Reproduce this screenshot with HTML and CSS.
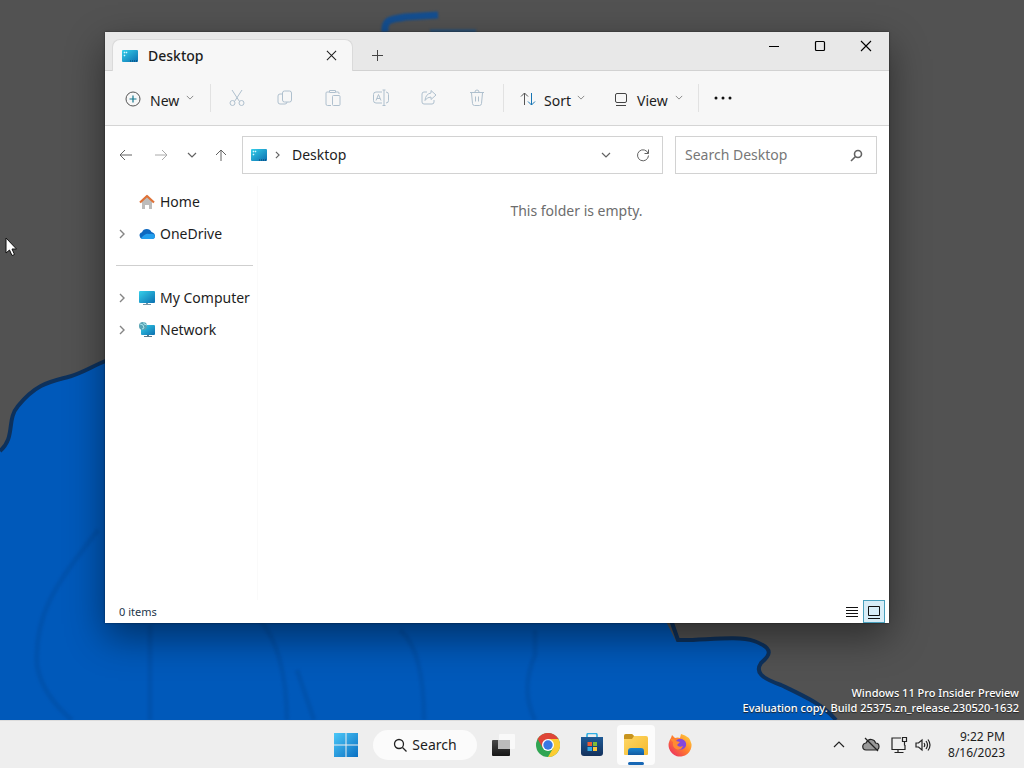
FILE: index.html
```html
<!DOCTYPE html>
<html lang="en">
<head>
<meta charset="utf-8">
<meta name="viewport" content="width=device-width, initial-scale=1">
<title>Desktop</title>
<link rel="stylesheet" href="styles.css">
</head>
<body>
<svg class="defs" aria-hidden="true">
  <defs>
    <linearGradient id="teal" x1="0" y1="0" x2="1" y2="1"><stop offset="0" stop-color="#35d0ea"/><stop offset="1" stop-color="#0b6fb0"/></linearGradient>
    <linearGradient id="win" x1="0" y1="0" x2="1" y2="1"><stop offset="0" stop-color="#4cc8f8"/><stop offset="1" stop-color="#0a6fc2"/></linearGradient>
    <linearGradient id="folder" x1="0" y1="0" x2="1" y2="1"><stop offset="0" stop-color="#ffd968"/><stop offset="1" stop-color="#f5b92e"/></linearGradient>
    <linearGradient id="dock" x1="0" y1="0" x2="0" y2="1"><stop offset="0" stop-color="#1a86d0"/><stop offset="1" stop-color="#1259a0"/></linearGradient>
    <linearGradient id="bag" x1="0" y1="0" x2="0" y2="1"><stop offset="0" stop-color="#1d5a96"/><stop offset="1" stop-color="#14315c"/></linearGradient>
    <linearGradient id="dark" x1="0" y1="0" x2="0" y2="1"><stop offset="0" stop-color="#484848"/><stop offset="1" stop-color="#161616"/></linearGradient>
    <linearGradient id="fire" x1="1" y1="0" x2="0" y2="1"><stop offset="0" stop-color="#ffdc3c"/><stop offset=".5" stop-color="#ff7a2e"/><stop offset="1" stop-color="#e8206c"/></linearGradient>
    <symbol id="i-desktop" viewBox="0 0 16 12"><rect width="16" height="12" rx="1" fill="url(#teal)"/><path d="M2 2h1v1H2zM2 5h1v1H2zM4 2h1v1H4z" fill="#d8f8ff" stroke="#d8f8ff" stroke-width=".5"/><path d="M8 11h1m1 0h1m1 0h1m1 0h1" stroke="#063b66"/></symbol>
    <symbol id="i-down" viewBox="0 0 10 6"><path d="M1 1l4 4 4-4" fill="none" stroke="currentColor" stroke-width="1.2"/></symbol>
    <symbol id="i-right" viewBox="0 0 6 10"><path d="M1 1l4 4-4 4" fill="none" stroke="currentColor" stroke-width="1.4"/></symbol>
    <symbol id="i-close" viewBox="0 0 12 12"><path d="M1 1l10 10M11 1L1 11" fill="none" stroke="currentColor" stroke-width="1.1"/></symbol>
  </defs>
</svg>

<main class="desktop">
  <svg class="wallpaper" viewBox="0 0 1024 720" preserveAspectRatio="none" aria-hidden="true">
    <rect width="1024" height="720" fill="#525252"/>
    <path d="M0 451C16 437 6 420 18 406C36 384 49 382 68 377C83 373 92 366 108 360L400 330L660 610L676 641C700 642 735 635 756 642C776 649 769 656 761 663C755 672 761 678 781 685C804 696 822 704 836 720H0Z" fill="#0059ba"/>
    <g fill="none" stroke="#0d315c" stroke-width="4">
      <path d="M0 451C16 437 6 420 18 406C36 384 49 382 68 377C83 373 92 366 108 360"/>
      <path d="M671 620L678 640C700 641 738 635 754 641C776 649 769 656 761 663C755 672 761 678 781 685C804 696 822 704 836 720"/>
    </g>
    <path class="soft" d="M385 32C384 18 392 20 405 17L438 15" fill="none" stroke="#144f91" stroke-width="7"/>
    <path class="soft" d="M430 31h46" stroke="#24507c" stroke-width="3"/>
    <path class="soft" d="M98 530C60 580 34 610 37 665Q42 695 72 720M150 625V720M260 620Q286 650 287 720M297 670L314 720M400 630Q424 650 424 720M535 630V655Q520 690 535 720" fill="none" stroke="#0053ae" stroke-width="5"/>
  </svg>

  <section class="window" aria-label="Desktop">
    <header class="titlebar">
      <div class="tab">
        <svg class="folder-icon"><use href="#i-desktop"/></svg>
        <span class="tab-title">Desktop</span>
        <button class="tab-close" aria-label="Close tab"><svg width="11" height="11"><use href="#i-close"/></svg></button>
      </div>
      <button class="new-tab" aria-label="New tab"><svg width="11" height="11" viewBox="0 0 11 11"><path d="M5.500 0v11M0 5.500h11" stroke="currentColor" fill="none"/></svg></button>
      <div class="controls">
        <button aria-label="Minimize"><svg width="12" height="12" viewBox="0 0 12 12"><path d="M1 6.500h10" stroke="currentColor"/></svg></button>
        <button aria-label="Maximize"><svg width="12" height="12" viewBox="0 0 12 12"><rect x="1.500" y="1.500" width="9" height="9" rx="1" fill="none" stroke="currentColor" stroke-width="1.2"/></svg></button>
        <button aria-label="Close"><svg width="12" height="12"><use href="#i-close"/></svg></button>
      </div>
    </header>

    <div class="toolbar" role="toolbar" aria-label="Commands">
      <button class="command new"><svg width="16" height="16" viewBox="0 0 16 16" fill="none"><circle cx="8" cy="8" r="7" stroke="#555"/><path d="M8 4.500v7M4.500 8h7" stroke="#12768e" stroke-width="1.2"/></svg><span>New</span><svg class="chev"><use href="#i-down"/></svg></button>
      <span class="rule"></span>
      <div class="tools">
        <button disabled aria-label="Cut"><svg width="18" height="18" viewBox="0 0 18 18"><path d="M4 1l7.500 11.500M14 1L6.500 12.500"/><circle cx="4.500" cy="14" r="2.500"/><circle cx="13.500" cy="14" r="2.500"/></svg></button>
        <button disabled aria-label="Copy"><svg width="18" height="18" viewBox="0 0 18 18"><rect x="6.500" y="2" width="9" height="11" rx="2"/><path d="M6 5H4Q2 5 2 7v6q0 2 2 2h5q2 0 2-2"/></svg></button>
        <button disabled aria-label="Paste"><svg width="18" height="18" viewBox="0 0 18 18"><path d="M5 3H3q-1 0-1 1v11q0 1.500 1.500 1.500H7M12 3h2q1 0 1 1v1"/><path d="M5.500 1.500h6v2h-6z"/><rect x="8.500" y="6.500" width="7.500" height="10" rx="1"/></svg></button>
        <button disabled aria-label="Rename"><svg width="18" height="18" viewBox="0 0 18 18"><path d="M10 3H4Q1.500 3 1.500 5.500v6Q1.500 14 4 14h6M14 3q2.500 0 2.500 2.500v6Q16.500 14 14 14M12 1v15M10.500 1h3M10.500 16.500h3M4 11.500l2.500-6 2.500 6M5 9.500h3"/></svg></button>
        <button disabled aria-label="Share"><svg width="18" height="18" viewBox="0 0 18 18"><path d="M7 3H4Q2 3 2 5v8q0 2 2 2h8q2 0 2-2v-2"/><path d="M11 1.500l5 4.500-5 4.500V8Q7 8 5 11.500 5.500 5 11 4z"/></svg></button>
        <button disabled aria-label="Delete"><svg width="18" height="18" viewBox="0 0 18 18"><path d="M2 3.500h14M7 3q0-2 2-2t2 2M3.500 4l1 10.500q.2 2 2 2h5q1.800 0 2-2l1-10.500M7.500 7.500v5M10.500 7.500v5"/></svg></button>
      </div>
      <span class="rule"></span>
      <button class="command sort"><svg width="16" height="16" viewBox="0 0 16 16" fill="none"><path d="M4.500 14V2M1 5.500L4.500 2 8 5.500" stroke="#555"/><path d="M11.500 2v12M8 10.500l3.500 3.500 3.500-3.500" stroke="#1775b4"/></svg><span>Sort</span><svg class="chev"><use href="#i-down"/></svg></button>
      <button class="command view"><svg width="14" height="14" viewBox="0 0 14 14" fill="none" stroke="#444"><rect x="1.500" y="1.500" width="11" height="9" rx="1.500"/><path d="M2 13.500h10"/></svg><span>View</span><svg class="chev"><use href="#i-down"/></svg></button>
      <span class="rule"></span>
      <button class="more" aria-label="See more"><svg width="18" height="4" viewBox="0 0 18 4"><circle cx="2" cy="2" r="1.500"/><circle cx="9" cy="2" r="1.500"/><circle cx="16" cy="2" r="1.500"/></svg></button>
    </div>

    <div class="location">
      <div class="history">
        <button aria-label="Back"><svg width="14" height="12" viewBox="0 0 14 12"><path d="M13 6H1.500M6 1L1 6l5 5"/></svg></button>
        <button class="off" aria-label="Forward"><svg width="14" height="12" viewBox="0 0 14 12"><path d="M1 6h11.500M8 1l5 5-5 5"/></svg></button>
        <button class="narrow" aria-label="Recent locations"><svg width="10" height="6"><use href="#i-down"/></svg></button>
        <button class="up" aria-label="Up"><svg width="12" height="12" viewBox="0 0 12 12"><path d="M6 12V1M1 6l5-5 5 5"/></svg></button>
      </div>
      <nav class="address" aria-label="Address">
        <svg class="folder-icon"><use href="#i-desktop"/></svg>
        <svg class="crumb" width="5" height="8"><use href="#i-right"/></svg>
        <a href="#">Desktop</a>
        <button class="drop" aria-label="Previous locations"><svg width="10" height="6"><use href="#i-down"/></svg></button>
        <button class="reload" aria-label="Refresh"><svg width="14" height="14" viewBox="0 0 14 14"><path d="M12.200 5.500A5.500 5.500 0 1 0 12.500 7.500M12.500 1.500v4h-4"/></svg></button>
      </nav>
      <label class="find"><input type="search" placeholder="Search Desktop" aria-label="Search Desktop"><svg width="13" height="13" viewBox="0 0 13 13"><circle cx="8" cy="5" r="3.500"/><path d="M5.500 7.500L1 12"/></svg></label>
    </div>

    <div class="body">
      <nav class="sidebar" aria-label="Navigation">
        <a href="#"><span class="expand"></span><svg class="place" viewBox="0 0 16 16"><path d="M3 7l5-5 5 5v8h-3v-4H6v4H3z" fill="#bdbcbb"/><path d="M1 8.500L8 2l7 6.500" fill="none" stroke="#df7237" stroke-width="2.200" stroke-linejoin="round"/></svg>Home</a>
        <a href="#"><svg class="expand"><use href="#i-right"/></svg><svg class="place" viewBox="0 0 16 16"><path d="M3.500 13A3.500 3.500 0 0 1 3 6.200 5.200 5.200 0 0 1 12.500 6Q16 7 16 10q0 3-3 3z" fill="#0d68c0"/><path d="M2 12.500Q6 7 10 8q5-1 6 2 0 3-3 3H3.500z" fill="#239eed"/></svg>OneDrive</a>
        <hr>
        <a href="#"><svg class="expand"><use href="#i-right"/></svg><svg class="place" viewBox="0 0 16 16"><rect y="1" width="16" height="12" rx="1" fill="url(#teal)"/><path d="M7 13h2v1h3v1H4v-1h3z" fill="#7795a5"/></svg>My Computer</a>
        <a href="#"><svg class="expand"><use href="#i-right"/></svg><svg class="place" viewBox="0 0 16 16"><rect x="2" y="3" width="14" height="10" rx="1" fill="url(#teal)"/><path d="M8 13h2v1h3v1H5v-1h3z" fill="#58798c"/><circle cx="4" cy="4" r="4" fill="#58a3b4"/><path d="M1 2l3 1 1 3-2 1M5 0v2l3 1" stroke="#a5e2ea" fill="none"/></svg>Network</a>
      </nav>
      <div class="files"><p>This folder is empty.</p></div>
    </div>

    <footer class="status">
      <span>0 items</span>
      <div class="modes">
        <button aria-label="Details"><svg width="14" height="12" viewBox="0 0 14 12"><path d="M1 1.500h12M1 4.500h12M1 7.500h12M1 10.500h12"/></svg></button>
        <button class="on" aria-label="Large icons"><svg width="14" height="14" viewBox="0 0 14 14"><path d="M1.500 1.500h11v9h-11zM1 13.500h12"/></svg></button>
      </div>
    </footer>
  </section>

  <p class="watermark">Windows 11 Pro Insider Preview<br>Evaluation copy. Build 25375.zn_release.230520-1632</p>
  <svg class="pointer" width="13" height="20" viewBox="0 0 13 20" aria-hidden="true"><path d="M1 1v15l3.500-3 2.500 5.500 2.500-1-2.500-5.500h4.500z" fill="#fff" stroke="#111"/></svg>
</main>

<footer class="taskbar">
  <div class="apps">
    <button class="app start" aria-label="Start"><svg width="24" height="24" viewBox="0 0 24 24"><path d="M0 0h11.500v11.500H0zM12.500 0H24v11.500H12.500zM0 12.500h11.500V24H0zM12.500 12.500H24V24H12.500z" fill="url(#win)"/></svg></button>
    <button class="search"><svg width="14" height="14" viewBox="0 0 14 14"><circle cx="6" cy="6" r="4.500"/><path d="M9.500 9.500l4 4"/></svg>Search</button>
    <button class="app" aria-label="Task view"><svg width="24" height="24" viewBox="0 0 24 24"><rect x="0" y="7" width="18" height="16" rx="1" fill="url(#dark)"/><rect x="7" y="1" width="16" height="15" rx="1" fill="#fff" opacity=".65"/><path d="M6 7h12v9H6z" fill="#bcbcbc"/></svg></button>
    <button class="app" aria-label="Chrome"><svg width="24" height="24" viewBox="0 0 24 24"><circle cx="12" cy="12" r="12" fill="#30a553"/><path d="M1.600 6A12 12 0 0 1 22.400 6H12L6.800 15z" fill="#df4537"/><path d="M22.400 6A12 12 0 0 1 12 24l5.200-9L12 6z" fill="#fccc32"/><circle cx="12" cy="12" r="6" fill="#fff"/><circle cx="12" cy="12" r="4.700" fill="#3878e3"/></svg></button>
    <button class="app" aria-label="Store"><svg width="24" height="24" viewBox="0 0 24 24"><path d="M7 5V2q0-1.500 1.500-1.500h7Q17 .5 17 2v3" fill="none" stroke="#30aee3" stroke-width="1.600"/><path d="M1 4h22v16q0 3-3 3H4q-3 0-3-3z" fill="url(#bag)"/><path d="M7.500 9H12v4H7.500z" fill="#ed5b34"/><path d="M13 9h4v4h-4z" fill="#7dbb37"/><path d="M7.500 14H12v4H7.500z" fill="#32a9e4"/><path d="M13 14h4v4h-4z" fill="#fbc53a"/></svg></button>
    <button class="app active" aria-label="File Explorer"><svg width="26" height="24" viewBox="0 0 26 24"><path d="M1 3q0-2 2-2h6l2 2h12q2 0 2 2v16q0 1-1 1H2q-1 0-1-1z" fill="url(#folder)"/><path d="M1 3q0-2 2-2h6l2 2-2 3H1z" fill="#c79420"/><path d="M5 22v-4q0-3 3-3h10q3 0 3 3v4z" fill="url(#dock)"/></svg></button>
    <button class="app" aria-label="Firefox"><svg width="24" height="24" viewBox="0 0 24 24"><path d="M3 5l1-3 3 3q3-1 5 0L13 1q9 2 10.500 10A11.500 11.500 0 1 1 3 5z" fill="url(#fire)"/><path d="M8 8q2-3 6-2 5 2 4 7a6 6 0 1 1-11-5z" fill="#8547dc"/><path d="M2 6q5-1 6 2l4 1-3 3q2 3 6 1-2 5-7 3Q4 14 5 9z" fill="#ff8b32"/></svg></button>
  </div>
  <div class="tray">
    <button aria-label="Show hidden icons"><svg width="14" height="14" viewBox="0 0 14 14"><path d="M2 9l5-5 5 5"/></svg></button>
    <button aria-label="OneDrive"><svg width="18" height="16" viewBox="0 0 18 16"><path d="M4.500 13a3.500 3.500 0 0 1-.5-7q2-4 5.500-3.500Q13 3 13.500 6q3.500 0 3.500 3.500T13.500 13z" fill="#999"/><path d="M3 1l13 13"/></svg></button>
    <button aria-label="Network"><svg width="18" height="18" viewBox="0 0 18 18"><path d="M11 2H2v11.500h13V9M8 13.500v3M4.500 16.500h9M12.500 1.500h4v4h-4zM14.500 5.500v4"/></svg></button>
    <button aria-label="Volume"><svg width="18" height="16" viewBox="0 0 18 16"><path d="M2 6h2.500L8 3v10l-3.500-3H2zM10 6q1.500 2 0 4M12 4q3 4 0 8M14 2.500q4 5.500 0 11"/></svg></button>
    <button class="clock">9:22 PM<br>8/16/2023</button>
  </div>
</footer>
</body>
</html>
```

FILE: styles.css
```css
* { box-sizing: border-box; }
body {
  margin: 0;
  height: 100vh;
  display: flex;
  flex-direction: column;
  overflow: hidden;
  font: 14px/20px "Noto Sans", "Open Sans", sans-serif;
  color: #1d1d1d;
}
button {
  display: inline-flex;
  align-items: center;
  justify-content: center;
  border: 0;
  padding: 0;
  background: none;
  color: inherit;
  font: inherit;
}
a { color: inherit; text-decoration: none; }
p { margin: 0; }
svg { display: block; flex-shrink: 0; }
.defs { position: absolute; width: 0; height: 0; }

.desktop { position: relative; flex: 1; min-height: 0; background: #525252; }
.wallpaper { width: 100%; height: 100%; }
.soft { filter: blur(1px); }
.pointer { position: absolute; left: 5px; top: 237px; }
.watermark {
  position: absolute;
  right: 5px;
  bottom: 5px;
  color: #fff;
  font-size: 11px;
  font-weight: 500;
  line-height: 15px;
  text-align: right;
  text-shadow: 0 1px 1px #222;
}

.window {
  position: absolute;
  inset: 32px 135px 97px 105px;
  display: flex;
  flex-direction: column;
  background: #fff;
  box-shadow: 0 14px 36px rgba(0, 0, 0, .45), 0 0 2px rgba(0, 0, 0, .5);
}
.titlebar { display: flex; height: 39px; padding-left: 7px; background: #e8e8e8; border-bottom: 1px solid #d2d2d2; }
.tab {
  display: flex;
  align-items: center;
  width: 241px;
  height: 32px;
  margin-top: 7px;
  padding: 0 15px 0 9px;
  gap: 10px;
  background: #f7f7f7;
  border: 1px solid #dadada;
  border-bottom: 0;
  border-radius: 8px 8px 0 0;
}
.folder-icon { width: 16px; height: 12px; }
.tab-title { flex: 1; font-weight: 500; }
.new-tab { width: 49px; padding-top: 8px; color: #444; }
.controls { display: flex; margin-left: auto; height: 28px; color: #000; }
.controls button { width: 46px; }

.toolbar { display: flex; align-items: center; height: 55px; padding: 0 20px; background: #f7f7f7; border-bottom: 1px solid #d5d5d5; }
.rule { width: 1px; height: 28px; background: #e2e2e2; }
.command { height: 32px; gap: 8px; justify-content: flex-start; padding-top: 5px; }
.command > svg:first-child { margin-bottom: 3px; }
.chev { width: 8px; height: 5px; margin: 0 0 6px -2px; color: #888; }
.new { width: 85px; gap: 9px; }
.sort { width: 94px; margin-left: 16px; }
.view { width: 84px; gap: 9px; }
.tools { display: flex; width: 292px; padding-left: 2px; }
.tools button { width: 48px; height: 32px; }
.tools svg { fill: none; stroke: #afc0ce; }
.more { width: 48px; height: 32px; fill: #111; }

.location { display: flex; height: 60px; padding: 10px 12px 12px; gap: 12px; }
.history { display: flex; width: 113px; }
.history button { width: 18px; margin-right: 17px; }
.history .narrow { width: 10px; margin-right: 15px; }
.history .up { width: 18px; margin: 0; }
.location svg { fill: none; stroke: #626262; color: #626262; }
.history .off svg { stroke: #aaa; }
.location .folder-icon { stroke: none; }
.address { display: flex; flex: 1; align-items: center; padding-left: 8px; border: 1px solid #d2d2d2; }
.crumb { margin: 0 12px 0 8px; }
.address .drop { width: 28px; height: 32px; margin-left: auto; }
.address .reload { width: 46px; height: 32px; margin-right: -4px; }
.find { display: flex; align-items: center; width: 202px; padding: 0 13px 0 9px; border: 1px solid #d2d2d2; }
.find input { flex: 1; min-width: 0; padding: 0; border: 0; outline: 0; background: none; color: #333; font: inherit; }
.find input::placeholder { color: #777; opacity: 1; }
.find svg { stroke-width: 1.6; }

.body { display: flex; flex: 1; min-height: 0; }
.sidebar { width: 153px; border-right: 1px solid #fafafa; white-space: nowrap; }
.sidebar a { display: flex; align-items: center; height: 32px; padding-left: 14px; }
.sidebar hr { height: 1px; margin: 15px 4px 16px 11px; border: 0; background: #cfcfcf; }
.expand { width: 6px; height: 10px; margin-right: 14px; color: #858585; }
.place { width: 16px; height: 16px; margin-right: 5px; }
.files { flex: 1; padding: 15px 0 0 6px; text-align: center; color: #6d6d6d; }
.status { display: flex; justify-content: space-between; align-items: center; height: 23px; padding: 0 4px 0 14px; font-size: 11px; color: #24364a; }
.modes { display: flex; }
.modes button { width: 22px; height: 23px; }
.modes svg { fill: none; stroke: #111; }
.modes .on { background: #d8edf7; border: 1px solid #4aa0bd; }

.taskbar {
  display: grid;
  grid-template-columns: 1fr auto 1fr;
  height: 48px;
  background: #eee;
  border-top: 1px solid #dcdcdc;
}
.apps { grid-column: 2; display: flex; align-items: center; }
.app { position: relative; width: 44px; height: 40px; border-radius: 4px; }
.start { width: 48px; }
.search { width: 104px; height: 30px; margin: 0 5px 0 3px; gap: 5px; border-radius: 15px; background: #fbfbfb; }
.search svg { fill: none; stroke: #222; stroke-width: 1.3; }
.active { width: 38px; margin: 0 3px; background: #fcfcfc; }
.active::after { content: ""; position: absolute; bottom: 0; width: 16px; height: 3px; border-radius: 2px; background: #1767b5; }
.tray { grid-column: 3; display: flex; justify-content: flex-end; align-items: center; padding-right: 19px; }
.tray button { width: 24px; height: 40px; }
.tray button:nth-child(-n+2) { width: 32px; }
.tray svg { fill: none; stroke: #222; stroke-width: 1.2; }
.tray .clock { display: block; width: 70px; font-size: 12px; line-height: 16px; text-align: right; }
```
